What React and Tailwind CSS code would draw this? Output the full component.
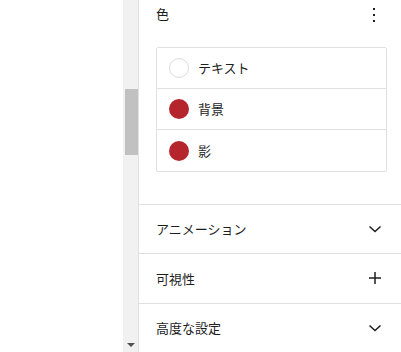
import React from 'react'

const font = { fontFamily: '"Noto Sans CJK JP", "Noto Sans", sans-serif' }

function Chevron() {
  return (
    <svg width="24" height="24" viewBox="0 0 24 24" className="text-[#1e1e1e]">
      <path d="M6.5 9.5 12 14.5 17.5 9.5" fill="none" stroke="currentColor" strokeWidth="1.5" />
    </svg>
  )
}

function Plus() {
  return (
    <svg width="24" height="24" viewBox="0 0 24 24" className="text-[#1e1e1e]">
      <path d="M12 6v12M6 12h12" fill="none" stroke="currentColor" strokeWidth="1.5" />
    </svg>
  )
}

function Dots() {
  return (
    <svg width="24" height="24" viewBox="0 0 24 24" className="text-[#1e1e1e]">
      <rect x="11" y="6" width="2" height="2" fill="currentColor" />
      <rect x="11" y="12" width="2" height="2" fill="currentColor" />
      <rect x="11" y="18" width="2" height="2" fill="currentColor" />
    </svg>
  )
}

function ColorRow({ label, color, last }) {
  return (
    <div className={`flex items-center h-[41px] px-3 gap-[9px] ${last ? '' : 'border-b border-[#e0e0e0]'}`}>
      {color ? (
        <span className="w-5 h-5 rounded-full bg-[#b5262c] shrink-0" />
      ) : (
        <span className="w-5 h-5 rounded-full border border-[#dcdcdc] bg-white shrink-0" />
      )}
      <span className="text-[13px] text-[#1e1e1e]">{label}</span>
    </div>
  )
}

function Section({ title, icon }) {
  return (
    <div className="border-t border-[#e0e0e0] h-[51px] flex items-center justify-between pl-[17px] pr-[14px]">
      <span className="text-[13px] text-[#1e1e1e]">{title}</span>
      {icon}
    </div>
  )
}

export default function App() {
  return (
    <div className="w-[401px] h-[352px] flex overflow-hidden bg-white" style={font}>
      <div className="w-[123px] bg-white" />
      <div className="w-4 bg-[#f1f1f1] border-r border-[#e0e0e0] relative">
        <div className="absolute left-[2px] top-[89px] w-[13px] h-[66px] bg-[#c1c1c1]" />
        <div className="absolute bottom-[5px] left-[4px] w-0 h-0 border-l-[4px] border-r-[4px] border-t-[4px] border-l-transparent border-r-transparent border-t-[#505050]" />
      </div>
      <div className="flex-1 flex flex-col">
        <div className="pl-[17px] pr-[14px] pb-8">
          <div className="h-[28px] flex items-center justify-between">
            <span className="text-[13px] text-[#1e1e1e]">色</span>
            <span className="mr-[1px]"><Dots /></span>
          </div>
          <div className="mt-[19px] border border-[#e0e0e0] rounded-[2px]">
            <ColorRow label="テキスト" />
            <ColorRow label="背景" color />
            <ColorRow label="影" color last />
          </div>
        </div>
        <Section title="アニメーション" icon={<Chevron />} />
        <Section title="可視性" icon={<Plus />} />
        <Section title="高度な設定" icon={<Chevron />} />
      </div>
    </div>
  )
}
